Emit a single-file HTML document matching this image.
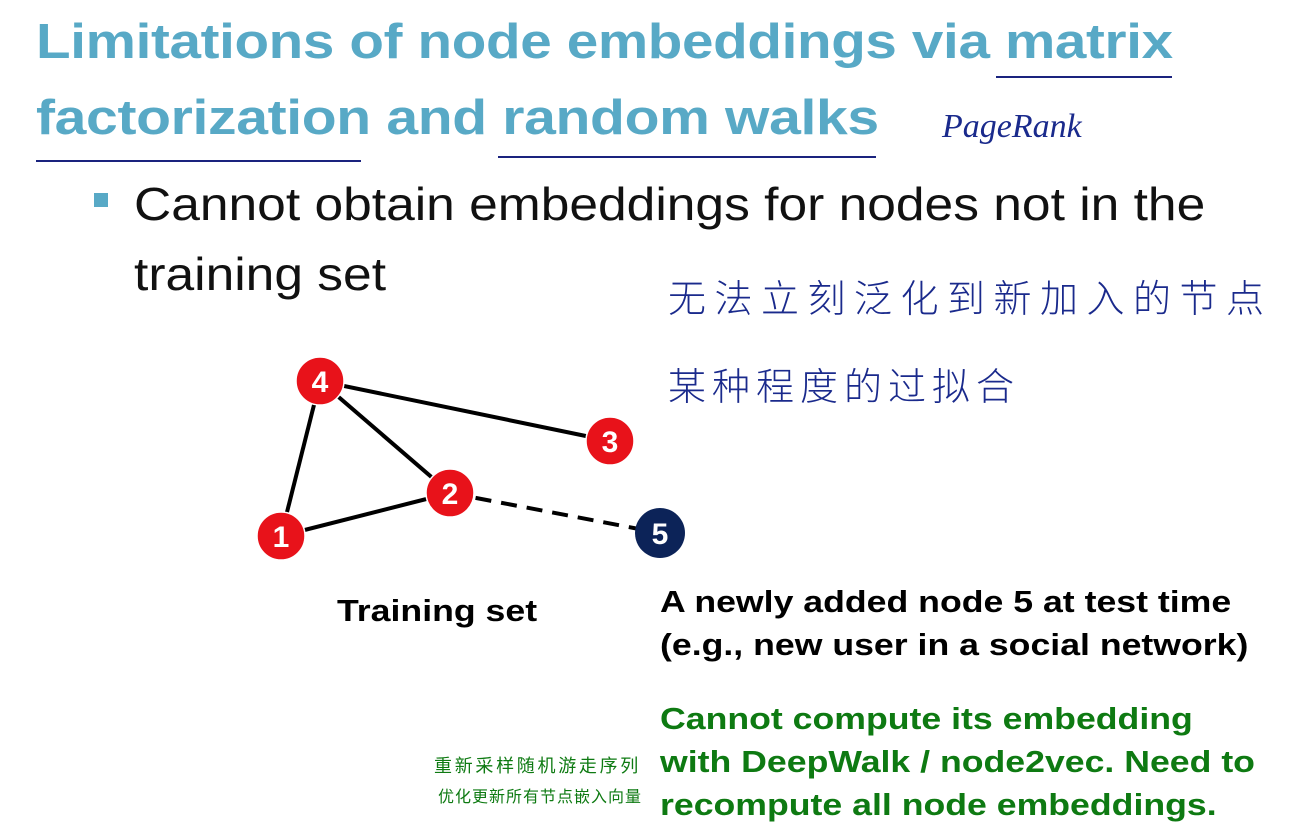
<!DOCTYPE html>
<html><head><meta charset="utf-8"><style>
body{margin:0;width:1303px;height:837px;background:#fff;position:relative;overflow:hidden;font-family:"Liberation Sans","Noto Sans CJK SC",sans-serif}
.a{position:absolute;white-space:nowrap;transform-origin:0 0}
.t{color:#58a9c6;font-weight:bold;font-size:49px;letter-spacing:-0.3px}
.ul{position:absolute;height:2px;background:#1a237e}
.hw{color:#1a2a8c;font-family:"WenQuanYi Zen Hei","Noto Sans CJK SC",sans-serif;font-weight:300}
.b{font-weight:bold;font-size:31px;transform:scaleX(1.15)}
.g{color:#0e7a12}
</style></head><body>
<div class="a t" style="left:36px;top:14px;transform:scaleX(1.155)">Limitations of node embeddings via matrix</div>
<div class="a t" style="left:36px;top:90px;transform:scaleX(1.165)">factorization and random walks</div>
<div class="ul" style="left:996px;top:76px;width:176px"></div>
<div class="ul" style="left:36px;top:160px;width:325px"></div>
<div class="ul" style="left:498px;top:156px;width:378px"></div>
<div class="a hw" style="left:942px;top:108px;font-size:34px;font-family:'Liberation Serif',serif;font-style:italic">PageRank</div>
<div class="a" style="left:94px;top:193px;width:14px;height:14px;background:#58a9c6"></div>
<div class="a" style="left:134px;top:177px;font-size:46px;color:#111;transform:scaleX(1.12)">Cannot obtain embeddings for nodes not in the</div>
<div class="a" style="left:134px;top:247px;font-size:46px;color:#111;transform:scaleX(1.12)">training set</div>
<div class="a hw" style="left:668px;top:268px;font-size:38px;letter-spacing:8.5px">无法立刻泛化到新加入的节点</div>
<div class="a hw" style="left:668px;top:356px;font-size:38px;letter-spacing:6px">某种程度的过拟合</div>
<svg class="a" style="left:0;top:0" width="1303" height="837">
<g stroke="#000" stroke-width="4">
<line x1="320" y1="381" x2="610" y2="441"/><line x1="320" y1="381" x2="450" y2="493"/>
<line x1="320" y1="381" x2="281" y2="536"/><line x1="281" y1="536" x2="450" y2="493"/>
<line x1="450" y1="493" x2="660" y2="533" stroke-dasharray="16,10"/></g>
<g fill="#e8121a" stroke="#fff" stroke-width="1.5">
<circle cx="320" cy="381" r="24"/><circle cx="610" cy="441" r="24"/><circle cx="450" cy="493" r="24"/><circle cx="281" cy="536" r="24"/></g>
<circle cx="660" cy="533" r="25" fill="#0c2358"/>
<g fill="#fff" font-family="Liberation Sans" font-weight="bold" font-size="30" text-anchor="middle">
<text x="320" y="392">4</text><text x="610" y="452">3</text><text x="450" y="504">2</text><text x="281" y="547">1</text><text x="660" y="544">5</text></g>
</svg>
<div class="a b" style="left:337px;top:593px;color:#000">Training set</div>
<div class="a b" style="left:660px;top:584px;color:#000">A newly added node 5 at test time</div>
<div class="a b" style="left:660px;top:627px;color:#000">(e.g., new user in a social network)</div>
<div class="a b g" style="left:660px;top:701px">Cannot compute its embedding</div>
<div class="a b g" style="left:660px;top:744px">with DeepWalk / node2vec. Need to</div>
<div class="a b g" style="left:660px;top:787px">recompute all node embeddings.</div>
<div class="a g" style="left:434px;top:752px;font-size:18px;letter-spacing:2.7px">重新采样随机游走序列</div>
<div class="a g" style="left:438px;top:783px;font-size:16px;letter-spacing:1px">优化更新所有节点嵌入向量</div>
</body></html>
